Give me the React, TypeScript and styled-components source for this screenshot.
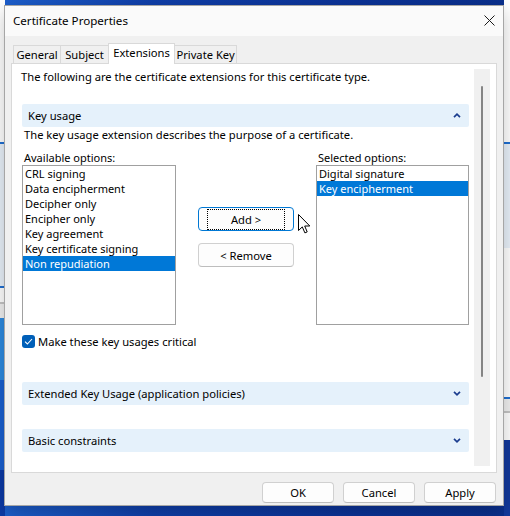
import React from "react";
import styled, { createGlobalStyle } from "styled-components";

const GlobalStyle = createGlobalStyle`
  html, body { margin: 0; padding: 0; }
  body {
    width: 510px;
    height: 516px;
    overflow: hidden;
    font-family: "Segoe UI", "Noto Sans", "Open Sans", sans-serif;
    font-size: 11.2px;
    color: #000;
    background:
      linear-gradient(to bottom, #fff 0 142px, #1f6fd2 142px 144px, #e9f1fa 144px 286px, #1f6fd2 286px 288px, #fff 288px 302px, #c4c4c4 302px 304px, #f0f0f0 304px 318px, #2d8ae0 318px 380px, #1a5fcf 380px 470px, #0d3aa6 470px) left top / 5px 100% no-repeat,
      linear-gradient(to bottom, #fff 0 142px, #1f6fd2 142px 144px, #e9f1fa 144px 248px, #fff 248px 397px, #1f6fd2 397px 399px, #f0f0f0 399px 411px, #c4c4c4 411px 413px, #fff 413px 440px, #12399c 440px) right top / 6px 100% no-repeat,
      linear-gradient(90deg, #1d5fcc 0, #0f3ea8 30%, #0b3296 70%, #0a2f8c 100%);
  }
  #root { width: 510px; height: 516px; }
`;

const Dialog = styled.div`
  margin: 5px 0 0 4px;
  width: 500px;
  height: 501px;
  box-sizing: border-box;
  border: 1px solid #a6a6a6;
  background: #f0f0f0;
  display: flex;
  flex-direction: column;
  box-shadow: 0 6px 18px rgba(0, 0, 0, 0.22);
`;

const TitleBar = styled.div`
  height: 30px;
  flex: none;
  background: #fafafa;
  display: flex;
  align-items: center;
  justify-content: space-between;
  padding-left: 8px;
`;

const Title = styled.span`
  font-size: 11.6px;
  line-height: 16px;
`;

const CloseBox = styled.div`
  width: 28px;
  height: 30px;
  display: flex;
  align-items: center;
  justify-content: center;
  svg { margin-top: -2px; }
`;

const Main = styled.div`
  padding: 7px 6px 0 6px;
  display: flex;
  flex-direction: column;
`;

const TabStrip = styled.div`
  display: flex;
  align-items: flex-end;
  height: 20px;
  padding-left: 2px;
`;

const Tab = styled.div<{ $w: number; $active?: boolean }>`
  width: ${(p) => p.$w}px;
  height: ${(p) => (p.$active ? 21 : 18)}px;
  box-sizing: border-box;
  margin-bottom: ${(p) => (p.$active ? -1 : 0)}px;
  margin-right: -1px;
  border: 1px solid #d9d9d9;
  border-bottom: none;
  background: ${(p) => (p.$active ? "#fff" : "#f0f0f0")};
  position: relative;
  z-index: ${(p) => (p.$active ? 2 : 1)};
  display: flex;
  align-items: ${(p) => (p.$active ? "flex-start" : "center")};
  justify-content: center;
  white-space: nowrap;
  line-height: 16px;
  padding-top: ${(p) => (p.$active ? 1 : 0)}px;
`;

const Panel = styled.div`
  height: 410px;
  box-sizing: border-box;
  border: 1px solid #d9d9d9;
  background: #fff;
  padding: 5px 6px 6px 0;
  display: flex;
`;

const Content = styled.div`
  flex: 1;
  padding: 0 5px 0 10px;
  display: flex;
  flex-direction: column;
`;

const Intro = styled.div`
  line-height: 16px;
  margin-left: -1px;
`;

const SectionBar = styled.div<{ $mt: number }>`
  margin-top: ${(p) => p.$mt}px;
  height: 23px;
  background: #e5f1fb;
  border-radius: 2px;
  display: flex;
  align-items: center;
  justify-content: space-between;
  padding: 0 8px 0 6px;
  line-height: 16px;
`;

const Desc = styled.div`
  line-height: 16px;
  padding-left: 2px;
`;

const ListGrid = styled.div`
  margin-top: 7px;
  display: grid;
  grid-template-columns: 154px 140px 153px;
`;

const ListColumn = styled.div`
  display: flex;
  flex-direction: column;
`;

const ListLabel = styled.div`
  font-size: 11px;
  line-height: 15px;
  height: 15px;
  padding-left: 2px;
`;

const ListBox = styled.div`
  height: 160px;
  box-sizing: border-box;
  border: 1px solid #a0a0a0;
  background: #fff;
`;

const ListItem = styled.div<{ $selected?: boolean }>`
  height: 15px;
  font-size: 11px;
  line-height: 15px;
  padding-left: 2px;
  white-space: nowrap;
  background: ${(p) => (p.$selected ? "#0078d7" : "transparent")};
  color: ${(p) => (p.$selected ? "#fff" : "#000")};
`;

const ButtonColumn = styled.div`
  position: relative;
  display: flex;
  flex-direction: column;
  gap: 12px;
  padding: 57px 0 0 22px;
`;

const MoveButton = styled.div<{ $focused?: boolean }>`
  width: 96px;
  height: 24px;
  box-sizing: border-box;
  border: 1px solid ${(p) => (p.$focused ? "#0078d4" : "#d0d0d0")};
  border-bottom-color: ${(p) => (p.$focused ? "#0078d4" : "#bdbdbd")};
  border-radius: 4px;
  background: #fdfdfd;
  display: flex;
  padding: 1px 8px 0 8px;
`;

const FocusRing = styled.span<{ $on?: boolean }>`
  flex: 1;
  display: flex;
  align-items: center;
  justify-content: center;
  border: 1px dotted ${(p) => (p.$on ? "#000" : "transparent")};
  line-height: 16px;
`;

const Cursor = styled.svg`
  position: absolute;
  left: 122px;
  top: 64px;
`;

const CheckRow = styled.div`
  margin-top: 9px;
  height: 15px;
  display: flex;
  align-items: center;
  gap: 3px;
  line-height: 15px;
`;

const CheckBox = styled.span`
  width: 13px;
  height: 13px;
  border-radius: 3px;
  background: #005fb8;
  display: flex;
  align-items: center;
  justify-content: center;
`;

const Scrollbar = styled.div`
  width: 16px;
  background: #f0f0f0;
  display: flex;
  justify-content: center;
  padding-top: 17px;
`;

const Thumb = styled.div`
  width: 2px;
  height: 291px;
  border-radius: 1px;
  background: #858585;
`;

const Footer = styled.div`
  margin-top: 9px;
  padding-right: 7px;
  display: flex;
  justify-content: flex-end;
  gap: 9px;
`;

const DialogButton = styled.div`
  width: 72px;
  height: 21px;
  box-sizing: border-box;
  border: 1px solid #d0d0d0;
  border-bottom-color: #bdbdbd;
  border-radius: 4px;
  background: #fdfdfd;
  display: flex;
  align-items: center;
  justify-content: center;
  line-height: 16px;
`;

const Chevron = ({ up }: { up?: boolean }) => (
  <svg width="8" height="5" viewBox="0 0 8 5">
    <path
      d={up ? "M1 4.2 L4 1.2 L7 4.2" : "M1 0.8 L4 3.8 L7 0.8"}
      fill="none"
      stroke="#1b3d8f"
      strokeWidth="1.7"
    />
  </svg>
);

const available = [
  "CRL signing",
  "Data encipherment",
  "Decipher only",
  "Encipher only",
  "Key agreement",
  "Key certificate signing",
  "Non repudiation",
];

const selected = ["Digital signature", "Key encipherment"];

export default function App() {
  return (
    <>
      <GlobalStyle />
      <Dialog>
        <TitleBar>
          <Title>Certificate Properties</Title>
          <CloseBox>
            <svg width="11" height="11" viewBox="0 0 11 11">
              <path d="M0.5 0.5 L10.5 10.5 M10.5 0.5 L0.5 10.5" stroke="#1a1a1a" strokeWidth="1" />
            </svg>
          </CloseBox>
        </TitleBar>
        <Main>
          <TabStrip>
            <Tab $w={48}>General</Tab>
            <Tab $w={49}>Subject</Tab>
            <Tab $w={67} $active>Extensions</Tab>
            <Tab $w={63}>Private Key</Tab>
          </TabStrip>
          <Panel>
            <Content>
              <Intro>The following are the certificate extensions for this certificate type.</Intro>
              <SectionBar $mt={19}>
                <span>Key usage</span>
                <Chevron up />
              </SectionBar>
              <Desc>The key usage extension describes the purpose of a certificate.</Desc>
              <ListGrid>
                <ListColumn>
                  <ListLabel>Available options:</ListLabel>
                  <ListBox>
                    {available.map((a) => (
                      <ListItem key={a} $selected={a === "Non repudiation"}>
                        {a}
                      </ListItem>
                    ))}
                  </ListBox>
                </ListColumn>
                <ButtonColumn>
                  <MoveButton $focused>
                    <FocusRing $on>Add &gt;</FocusRing>
                  </MoveButton>
                  <MoveButton>
                    <FocusRing>&lt; Remove</FocusRing>
                  </MoveButton>
                  <Cursor width="13" height="20" viewBox="0 0 13 20">
                    <path
                      d="M0.5 0.5 L0.5 16.5 L4.3 12.9 L6.9 18.9 L9.2 17.9 L6.7 12 L11.8 12 Z"
                      fill="#fff"
                      stroke="#000"
                      strokeWidth="1"
                      strokeLinejoin="miter"
                    />
                  </Cursor>
                </ButtonColumn>
                <ListColumn>
                  <ListLabel>Selected options:</ListLabel>
                  <ListBox>
                    {selected.map((s) => (
                      <ListItem key={s} $selected={s === "Key encipherment"}>
                        {s}
                      </ListItem>
                    ))}
                  </ListBox>
                </ListColumn>
              </ListGrid>
              <CheckRow>
                <CheckBox>
                  <svg width="9" height="7" viewBox="0 0 9 7">
                    <path d="M1 3.6 L3.4 6 L8 1" fill="none" stroke="#fff" strokeWidth="1.1" />
                  </svg>
                </CheckBox>
                <span>Make these key usages critical</span>
              </CheckRow>
              <SectionBar $mt={33}>
                <span>Extended Key Usage (application policies)</span>
                <Chevron />
              </SectionBar>
              <SectionBar $mt={24}>
                <span>Basic constraints</span>
                <Chevron />
              </SectionBar>
            </Content>
            <Scrollbar>
              <Thumb />
            </Scrollbar>
          </Panel>
        </Main>
        <Footer>
          <DialogButton>OK</DialogButton>
          <DialogButton>Cancel</DialogButton>
          <DialogButton>Apply</DialogButton>
        </Footer>
      </Dialog>
    </>
  );
}
